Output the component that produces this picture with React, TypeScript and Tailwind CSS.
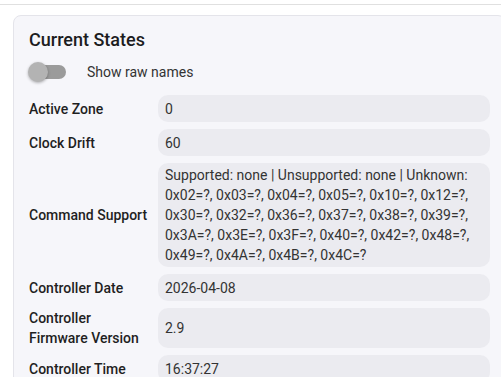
import React from "react";

const rows: { label: string; value: string }[] = [
  { label: "Active Zone", value: "0" },
  { label: "Clock Drift", value: "60" },
  {
    label: "Command Support",
    value:
      "Supported: none | Unsupported: none | Unknown: 0x02=?, 0x03=?, 0x04=?, 0x05=?, 0x10=?, 0x12=?, 0x30=?, 0x32=?, 0x36=?, 0x37=?, 0x38=?, 0x39=?, 0x3A=?, 0x3E=?, 0x3F=?, 0x40=?, 0x42=?, 0x48=?, 0x49=?, 0x4A=?, 0x4B=?, 0x4C=?",
  },
  { label: "Controller Date", value: "2026-04-08" },
  { label: "Controller Firmware Version", value: "2.9" },
  { label: "Controller Time", value: "16:37:27" },
];

export default function App() {
  return (
    <div
      className="w-[501px] h-[377px] overflow-hidden bg-white"
      style={{ fontFamily: "Roboto, 'Liberation Sans', sans-serif" }}
    >
      <div className="pt-[4px]">
        <div className="h-px bg-[#e0e0e0]" />
      </div>
      <div className="ml-[13px] mt-[10px] w-[493px] rounded-t-[8px] border border-[#e4e4ea] bg-[#f6f6fa] px-[15px] pt-[12px] pb-4">
        <div className="text-[18px] leading-[24px] font-medium text-[#1c1c1e]">Current States</div>
        <div className="mt-[8px] h-[24px] flex items-center">
          <div className="relative w-[39px] h-[20px] -ml-[1px]">
            <div className="absolute left-[2px] top-[3px] w-[36px] h-[14px] rounded-full bg-[#9b9b9b]" />
            <div className="absolute left-0 top-0 w-[20px] h-[20px] rounded-full bg-[#b3b3b3] shadow-[0_1px_3px_rgba(0,0,0,0.3)]" />
          </div>
          <span className="ml-[20px] text-[14px] text-[#333333]">Show raw names</span>
        </div>
        <div className="mt-[11px] grid grid-cols-[129px_1fr] gap-y-[7px]">
          {rows.map((r) => (
            <React.Fragment key={r.label}>
              <div className="flex items-center pr-[8px] text-[14px] leading-[20px] font-medium text-[#1f1f1f]">
                {r.label}
              </div>
              <div className="min-h-[27px] flex items-center rounded-[10px] bg-[#ebebf0] px-[7px] py-[2px] text-[14px] leading-[20px] text-[#333333]">
                {r.value}
              </div>
            </React.Fragment>
          ))}
        </div>
      </div>
    </div>
  );
}
